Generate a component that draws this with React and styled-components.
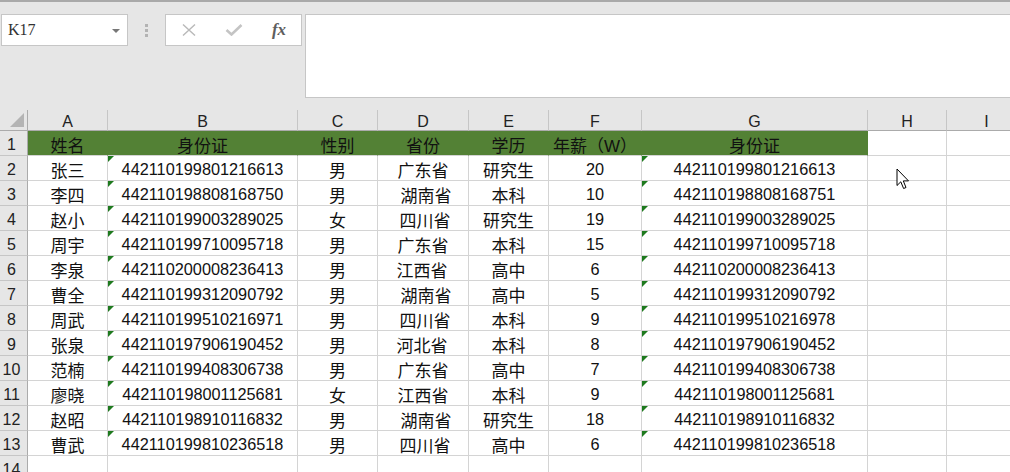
import React from "react";
import styled, { createGlobalStyle } from "styled-components";

const GlobalStyle = createGlobalStyle`
  html, body {
    margin: 0;
    padding: 0;
    background: #e6e6e6;
  }
  body {
    font-family: "Liberation Sans", "Noto Sans CJK SC", sans-serif;
    overflow: hidden;
  }
`;

const Page = styled.div`
  position: relative;
  width: 1010px;
  height: 472px;
  overflow: hidden;
  background: #e6e6e6;
`;

const TopRule = styled.div`
  height: 2px;
  background: #a9a9a9;
`;

const FormulaBar = styled.div`
  display: flex;
  align-items: flex-start;
  padding: 12px 0 0 1px;
  height: 96px;
  box-sizing: border-box;
  & > * {
    flex-shrink: 0;
  }
`;

const NameBox = styled.div`
  width: 127px;
  height: 32px;
  box-sizing: border-box;
  border: 1px solid #c6c6c6;
  background: #fff;
  display: flex;
  align-items: center;
  justify-content: space-between;
  padding: 0 7px 0 6px;
  font-family: "Liberation Serif", "DejaVu Serif", serif;
  font-size: 16px;
  color: #333;
`;

const Caret = styled.span`
  width: 0;
  height: 0;
  border-left: 4px solid transparent;
  border-right: 4px solid transparent;
  border-top: 4px solid #777;
  margin-top: 1px;
`;

const Grip = styled.div`
  width: 37px;
  height: 32px;
  display: flex;
  flex-direction: column;
  align-items: center;
  justify-content: center;
  gap: 2px;
`;

const GripDot = styled.span`
  width: 3px;
  height: 3px;
  background: #b3b3b3;
`;

const FxBox = styled.div`
  width: 137px;
  height: 32px;
  box-sizing: border-box;
  border: 1px solid #c6c6c6;
  background: #fff;
  display: flex;
  align-items: center;
  padding-left: 13px;
  gap: 25px;
`;

const FxButton = styled.span`
  display: flex;
  align-items: center;
  justify-content: center;
  width: 20px;
  height: 20px;
`;

const FxLabel = styled.span`
  font-family: "Liberation Serif", "DejaVu Serif", serif;
  font-style: italic;
  font-weight: bold;
  font-size: 17px;
  color: #5e5e5e;
  width: 20px;
  text-align: center;
`;

const FormulaInput = styled.div`
  margin-left: 3px;
  width: 720px;
  height: 84px;
  box-sizing: border-box;
  border: 1px solid #c6c6c6;
  background: #fff;
`;

const Sheet = styled.div`
  margin-top: 12px;
  display: grid;
  grid-template-columns: 28px 80px 190px 80px 91px 80px 93px 226px 79px 80px;
  grid-template-rows: 21px repeat(14, 25px);
`;

const Corner = styled.div`
  position: relative;
  background: #e6e6e6;
  border-right: 1px solid #ababab;
  border-bottom: 1px solid #ababab;
  &::after {
    content: "";
    position: absolute;
    right: 3px;
    bottom: 3px;
    width: 0;
    height: 0;
    border-left: 14px solid transparent;
    border-bottom: 14px solid #b4b4b4;
  }
`;

const ColHead = styled.div`
  background: #e6e6e6;
  border-right: 1px solid #c6c6c6;
  border-bottom: 1px solid #ababab;
  display: flex;
  align-items: flex-end;
  justify-content: center;
  padding-bottom: 0;
  line-height: 17px;
  font-size: 16px;
  color: #222;
`;

const RowHead = styled.div`
  background: #e6e6e6;
  border-right: 1px solid #ababab;
  border-bottom: 1px solid #c6c6c6;
  display: flex;
  align-items: center;
  justify-content: center;
  padding: 3px 4px 0 0;
  font-size: 16px;
  color: #222;
`;

const Cell = styled.div`
  position: relative;
  background: ${(p) => (p.$green ? "#538135" : "#fff")};
  border-right: 1px solid ${(p) => (p.$green ? "#538135" : "#d4d4d4")};
  border-bottom: 1px solid #d4d4d4;
  display: flex;
  align-items: center;
  justify-content: center;
  white-space: nowrap;
  font-size: ${(p) => (p.$cjk ? "17px" : "16.3px")};
  color: #111;
  padding: 3px ${(p) => Math.max(0, -(p.$shift || 0) * 2)}px 0
    ${(p) => Math.max(0, (p.$shift || 0) * 2)}px;
  &::before {
    content: "";
    display: ${(p) => (p.$flag ? "block" : "none")};
    position: absolute;
    left: 0;
    top: 0;
    width: 0;
    height: 0;
    border-top: 6px solid #1e7a1e;
    border-right: 6px solid transparent;
  }
`;

const Cursor = styled.svg`
  position: absolute;
  left: 896px;
  top: 168px;
`;

const columns = ["A", "B", "C", "D", "E", "F", "G", "H", "I"];
const header = ["姓名", "身份证", "性别", "省份", "学历", "年薪（W）", "身份证"];

const rows = [
  ["张三", "442110199801216613", "男", "广东省", "研究生", "20", "442110199801216613", 0],
  ["李四", "442110198808168750", "男", "湖南省", "本科", "10", "442110198808168751", 3],
  ["赵小", "442110199003289025", "女", "四川省", "研究生", "19", "442110199003289025", 2],
  ["周宇", "442110199710095718", "男", "广东省", "本科", "15", "442110199710095718", 0],
  ["李泉", "442110200008236413", "男", "江西省", "高中", "6", "442110200008236413", -1],
  ["曹全", "442110199312090792", "男", "湖南省", "高中", "5", "442110199312090792", 3],
  ["周武", "442110199510216971", "男", "四川省", "本科", "9", "442110199510216978", 2],
  ["张泉", "442110197906190452", "男", "河北省", "本科", "8", "442110197906190452", -1],
  ["范楠", "442110199408306738", "男", "广东省", "高中", "7", "442110199408306738", 0],
  ["廖晓", "442110198001125681", "女", "江西省", "本科", "9", "442110198001125681", 0],
  ["赵昭", "442110198910116832", "男", "湖南省", "研究生", "18", "442110198910116832", 3],
  ["曹武", "442110199810236518", "男", "四川省", "高中", "6", "442110199810236518", 2],
];

const CloseIcon = () => (
  <svg width="16" height="12" viewBox="0 0 16 12">
    <path d="M2 0.5 L14 11.5 M14 0.5 L2 11.5" stroke="#b9b9b9" strokeWidth="1.4" fill="none" />
  </svg>
);

const CheckIcon = () => (
  <svg width="18" height="12" viewBox="0 0 18 12">
    <path d="M1.5 6 L6.5 10.5 L16.5 1" stroke="#c4c4c4" strokeWidth="2.6" fill="none" />
  </svg>
);

const App = () => {
  return (
    <Page>
      <GlobalStyle />
      <TopRule />
      <FormulaBar>
        <NameBox>
          <span>K17</span>
          <Caret />
        </NameBox>
        <Grip>
          <GripDot />
          <GripDot />
          <GripDot />
        </Grip>
        <FxBox>
          <FxButton>
            <CloseIcon />
          </FxButton>
          <FxButton>
            <CheckIcon />
          </FxButton>
          <FxLabel>fx</FxLabel>
        </FxBox>
        <FormulaInput />
      </FormulaBar>

      <Sheet>
        <Corner />
        {columns.map((c) => (
          <ColHead key={c}>{c}</ColHead>
        ))}

        <RowHead>1</RowHead>
        {header.map((h, i) => (
          <Cell key={i} $green $cjk>
            {h}
          </Cell>
        ))}
        <Cell />
        <Cell />

        {rows.map((r, i) => (
          <React.Fragment key={i}>
            <RowHead>{i + 2}</RowHead>
            <Cell $cjk>{r[0]}</Cell>
            <Cell $flag>{r[1]}</Cell>
            <Cell $cjk>{r[2]}</Cell>
            <Cell $cjk $shift={r[7]}>
              {r[3]}
            </Cell>
            <Cell $cjk>{r[4]}</Cell>
            <Cell>{r[5]}</Cell>
            <Cell $flag>{r[6]}</Cell>
            <Cell />
            <Cell />
          </React.Fragment>
        ))}

        <RowHead>14</RowHead>
        {columns.map((c) => (
          <Cell key={c} />
        ))}
      </Sheet>

      <Cursor width="14" height="23" viewBox="0 0 14 23">
        <path
          d="M1 1 L1 17.5 L4.8 13.8 L7.6 20.5 L10 19.5 L7.3 12.9 L12.5 12.9 Z"
          fill="#fff"
          stroke="#000"
          strokeWidth="1"
          strokeLinejoin="miter"
        />
      </Cursor>
    </Page>
  );
};

export default App;
